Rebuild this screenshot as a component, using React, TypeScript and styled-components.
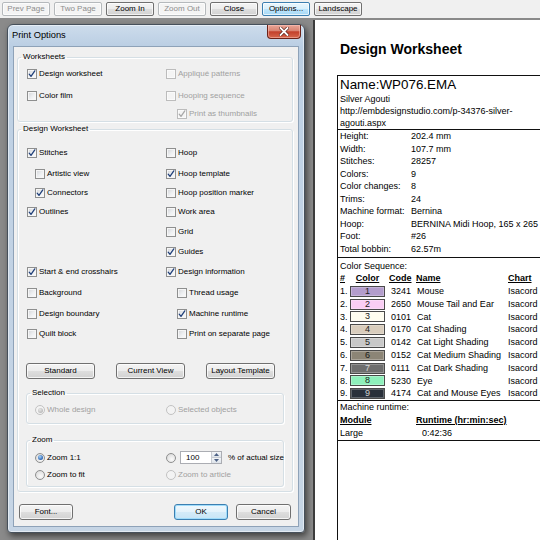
import React from "react";
import styled, { createGlobalStyle } from "styled-components";

const GlobalStyle = createGlobalStyle`
  html, body { margin: 0; padding: 0; }
  body {
    width: 540px; height: 540px; overflow: hidden; background: #8a8a8a;
    font-family: "Liberation Sans", Arial, sans-serif;
  }
  * { box-sizing: border-box; }
`;

const Screen = styled.div`
  width: 540px;
  height: 540px;
  display: flex;
  flex-direction: column;
  overflow: hidden;
`;

/* ---------- toolbar ---------- */
const Toolbar = styled.div`
  height: 18px;
  flex-shrink: 0;
  display: flex;
  gap: 4px;
  padding: 2px 0 0 2px;
  background: #f0f0f0;
`;

type BtnState = "normal" | "disabled" | "focus";

const ToolButton = styled.button<{ $state: BtnState }>`
  width: 48px;
  height: 14px;
  padding: 0;
  border-radius: 2px;
  font-family: "Liberation Sans", Arial, sans-serif;
  font-size: 8px;
  line-height: 12px;
  text-align: center;
  border: 1px solid
    ${(p) => (p.$state === "disabled" ? "#b5b9bc" : p.$state === "focus" ? "#3c7fb1" : "#707070")};
  color: ${(p) => (p.$state === "disabled" ? "#8d8d8d" : "#000")};
  background: ${(p) =>
    p.$state === "disabled"
      ? "#f4f4f4"
      : p.$state === "focus"
      ? "linear-gradient(#eaf6fd, #d9f0fc 50%, #bee6fd 51%, #a7d9f5)"
      : "linear-gradient(#f4f4f4, #ececec 50%, #dedede 51%, #d2d2d2)"};
  box-shadow: inset 0 0 0 1px rgba(255, 255, 255, 0.7);
`;

/* ---------- main area ---------- */
const Main = styled.div`
  flex: 1;
  min-height: 0;
  display: flex;
  background: #8a8a8a;
`;

/* ---------- dialog ---------- */
const Dialog = styled.div`
  flex-shrink: 0;
  align-self: flex-start;
  width: 298px;
  height: 509px;
  margin: 6px 0 0 7px;
  border: 1px solid #46505b;
  border-radius: 6px 6px 4px 4px;
  background: linear-gradient(180deg, #cddcec 0px, #bacee3 22px, #bfd1e4 80px, #c6d5e5 100%);
  box-shadow: 2px 3px 6px rgba(0, 0, 0, 0.55), inset 0 0 0 1px rgba(255, 255, 255, 0.5);
  display: flex;
  flex-direction: column;
`;

const TitleBar = styled.div`
  height: 21px;
  flex-shrink: 0;
  display: flex;
  align-items: flex-start;
  justify-content: space-between;
  padding: 0 3px 0 4px;
`;

const TitleText = styled.span`
  font-size: 9.3px;
  line-height: 20px;
  color: #000;
`;

const CloseButton = styled.div`
  width: 34px;
  height: 14px;
  border: 1px solid #6b2218;
  border-top: none;
  border-radius: 0 0 4px 4px;
  background: linear-gradient(#e8a597, #d98371 45%, #c3402b 52%, #d6674c);
  display: flex;
  align-items: center;
  justify-content: center;
  box-shadow: inset 0 0 0 1px rgba(255, 200, 190, 0.5);
`;

const Client = styled.div`
  flex: 1;
  margin: 0 5px 5px 5px;
  border: 1px solid #8ea2b8;
  background: #f0f0f0;
  display: flex;
  flex-direction: column;
  padding: 5px 5px 6px 3px;
`;

const Group = styled.fieldset<{ $mt?: number; $inset?: boolean }>`
  margin: ${(p) => p.$mt ?? 0}px ${(p) => (p.$inset ? 8 : 0)}px 0;
  padding: 0;
  min-width: 0;
  border: 1px solid #d5dfe5;
  border-radius: 3px;
  box-shadow: inset 1px 1px 0 #fff, 1px 1px 0 #fff;
`;

const Legend = styled.legend`
  margin-left: 3px;
  padding: 0 2px;
  font-size: 8px;
  line-height: 10px;
  color: #000;
`;

const OptionGrid = styled.div<{ $rows: string; $col: number; $pl: number; $pt?: number; $pb?: number }>`
  display: grid;
  grid-template-columns: ${(p) => p.$col}px 1fr;
  grid-template-rows: ${(p) => p.$rows};
  padding: ${(p) => p.$pt ?? 0}px 0 ${(p) => p.$pb ?? 0}px ${(p) => p.$pl}px;
`;

const Item = styled.label<{ $indent?: number; $disabled?: boolean; $col?: number; $row?: number }>`
  display: flex;
  align-items: center;
  gap: 2px;
  padding-left: ${(p) => p.$indent ?? 0}px;
  font-size: 8px;
  line-height: 10px;
  white-space: nowrap;
  color: ${(p) => (p.$disabled ? "#a0a0a0" : "#000")};
  grid-column: ${(p) => p.$col ?? "auto"};
  grid-row: ${(p) => p.$row ?? "auto"};
`;

const Box = styled.span<{ $disabled?: boolean }>`
  width: 10px;
  height: 10px;
  flex-shrink: 0;
  border: 1px solid ${(p) => (p.$disabled ? "#bcbcbc" : "#8e8f8f")};
  background: ${(p) =>
    p.$disabled ? "#f4f4f4" : "linear-gradient(135deg, #d2d4d8 0%, #eef0f2 55%, #fcfcfc 100%)"};
  box-shadow: inset 0 0 0 1px ${(p) => (p.$disabled ? "#fafafa" : "#f6f6f6")};
  display: flex;
  align-items: center;
  justify-content: center;
`;

const Round = styled.span<{ $disabled?: boolean }>`
  width: 10px;
  height: 10px;
  flex-shrink: 0;
  border-radius: 50%;
  border: 1px solid ${(p) => (p.$disabled ? "#c2c2c2" : "#8e8f8f")};
  background: ${(p) =>
    p.$disabled ? "#f3f3f3" : "radial-gradient(circle at 60% 65%, #fbfbfb 0%, #e4e4e4 60%, #d0d0d0 100%)"};
  display: flex;
  align-items: center;
  justify-content: center;
`;

const Dot = styled.span<{ $disabled?: boolean }>`
  width: 5px;
  height: 5px;
  border-radius: 50%;
  background: ${(p) =>
    p.$disabled
      ? "radial-gradient(circle at 40% 35%, #e6e6e6, #a9a9a9)"
      : "radial-gradient(circle at 40% 35%, #a9d4f7, #2a64b4 70%, #1b3f7a)"};
`;

const CheckMark = ({ color }: { color: string }) => (
  <svg width="8" height="8" viewBox="0 0 8 8">
    <path d="M1.2 4.2 L3 6.4 L6.8 0.9" fill="none" stroke={color} strokeWidth="1.3" strokeLinecap="round" strokeLinejoin="round" />
  </svg>
);

const Check = ({
  label,
  checked,
  disabled,
  indent,
  col,
  row,
}: {
  label: string;
  checked?: boolean;
  disabled?: boolean;
  indent?: number;
  col?: number;
  row?: number;
}) => (
  <Item $indent={indent} $disabled={disabled} $col={col} $row={row}>
    <Box $disabled={disabled}>{checked && <CheckMark color={disabled ? "#a8a8a8" : "#21407a"} />}</Box>
    {label}
  </Item>
);

const Radio = ({
  label,
  checked,
  disabled,
}: {
  label?: string;
  checked?: boolean;
  disabled?: boolean;
}) => (
  <Item $disabled={disabled}>
    <Round $disabled={disabled}>{checked && <Dot $disabled={disabled} />}</Round>
    {label}
  </Item>
);

const ZoomCustom = styled.div`
  display: flex;
  align-items: center;
  gap: 4px;
  font-size: 8px;
  white-space: nowrap;
`;

const SpinBox = styled.div`
  width: 42px;
  height: 13px;
  border: 1px solid #abadb3;
  background: #fff;
  display: flex;
  margin-right: 2px;
`;

const SpinText = styled.span`
  flex: 1;
  font-size: 8px;
  line-height: 11px;
  padding-left: 5px;
`;

const SpinButtons = styled.div`
  width: 10px;
  display: flex;
  flex-direction: column;
  border-left: 1px solid #c8ccd2;
`;

const SpinHalf = styled.div<{ $up?: boolean }>`
  flex: 1;
  display: flex;
  align-items: center;
  justify-content: center;
  background: linear-gradient(#f4f6f8, #dde3ea);
  border-bottom: ${(p) => (p.$up ? "1px solid #c8ccd2" : "none")};
`;

const Arrow = ({ up }: { up?: boolean }) => (
  <svg width="5" height="3" viewBox="0 0 5 3">
    <path d={up ? "M0 3 L2.5 0 L5 3 Z" : "M0 0 L2.5 3 L5 0 Z"} fill="#4d6185" />
  </svg>
);

const ButtonRow = styled.div`
  display: flex;
  gap: 21px;
  padding-left: 8px;
  margin-top: 19px;
`;

const PushButton = styled.button<{ $w: number; $default?: boolean }>`
  width: ${(p) => p.$w}px;
  height: 16px;
  padding: 0;
  font-family: "Liberation Sans", Arial, sans-serif;
  font-size: 8px;
  line-height: 14px;
  color: #000;
  border-radius: 3px;
  border: 1px solid ${(p) => (p.$default ? "#3c7fb1" : "#707070")};
  background: ${(p) =>
    p.$default
      ? "linear-gradient(#f0f8fd, #e3f2fb 50%, #d3ebf9 51%, #c8e5f6)"
      : "linear-gradient(#f4f4f4, #ececec 50%, #dedede 51%, #d2d2d2)"};
  box-shadow: inset 0 0 0 1px ${(p) => (p.$default ? "#9fdcfb" : "rgba(255,255,255,0.75)")};
`;

const Footer = styled.div`
  display: flex;
  gap: 8px;
  margin-top: 12px;
  padding: 0 2px;
`;

const Spacer = styled.div`
  flex: 1;
`;

/* ---------- page preview ---------- */
const Page = styled.div`
  flex: 1;
  min-width: 0;
  margin: 2px 0 0 8px;
  background: #fff;
  border-left: 2px solid #3c3c3c;
  overflow: hidden;
  display: flex;
  flex-direction: column;
  padding: 21px 0 0 22px;
  color: #000;
`;

const PageTitle = styled.div`
  font-size: 14px;
  font-weight: bold;
  line-height: 16px;
  margin-left: 3px;
`;

const Sheet = styled.div`
  margin-top: 18px;
  width: 320px;
  flex: 1;
  flex-shrink: 0;
  border-top: 1px solid #111;
  border-left: 1px solid #111;
  display: flex;
  flex-direction: column;
  font-size: 9px;
`;

const Section = styled.div<{ $pt?: number; $pb?: number; $last?: boolean }>`
  padding: ${(p) => p.$pt ?? 0}px 0 ${(p) => p.$pb ?? 0}px 2px;
  border-bottom: 1px solid #111;
`;

const NameLine = styled.div`
  font-size: 13.4px;
  line-height: 17px;
`;

const TextLine = styled.div`
  line-height: 12px;
`;

const InfoGrid = styled.div`
  display: grid;
  grid-template-columns: 71px 1fr;
  grid-auto-rows: 12.5px;
  line-height: 12.5px;
  white-space: nowrap;
`;

const ColorGrid = styled.div`
  display: grid;
  grid-template-columns: 10px 39px 27px 92px auto;
  grid-template-rows: 13px;
  grid-auto-rows: 12.8px;
  line-height: 12.8px;
  white-space: nowrap;
  align-items: center;
`;

const Head = styled.span<{ $center?: boolean }>`
  font-weight: bold;
  text-decoration: underline;
  line-height: 13px;
  width: ${(p) => (p.$center ? "35px" : "auto")};
  text-align: ${(p) => (p.$center ? "center" : "left")};
`;

const Cell = styled.span<{ $pl?: number }>`
  padding-left: ${(p) => p.$pl ?? 0}px;
`;

const Swatch = styled.span<{ $bg: string; $fg: string }>`
  width: 35px;
  height: 11px;
  border: 1px solid #4a4a4a;
  background: ${(p) => p.$bg};
  color: ${(p) => p.$fg};
  text-align: center;
  line-height: 9px;
  font-size: 9px;
  box-shadow: inset 0 0 0 1px rgba(255, 255, 255, 0.25);
`;

const RuntimeGrid = styled.div`
  display: grid;
  grid-template-columns: 76px 1fr;
  grid-auto-rows: 12.8px;
  line-height: 12.8px;
  white-space: nowrap;
`;

const info: [string, string][] = [
  ["Height:", "202.4 mm"],
  ["Width:", "107.7 mm"],
  ["Stitches:", "28257"],
  ["Colors:", "9"],
  ["Color changes:", "8"],
  ["Trims:", "24"],
  ["Machine format:", "Bernina"],
  ["Hoop:", "BERNINA Midi Hoop, 165 x 265"],
  ["Foot:", "#26"],
  ["Total bobbin:", "62.57m"],
];

const colors = [
  { n: 1, bg: "#b39dcc", fg: "#222", code: "3241", name: "Mouse" },
  { n: 2, bg: "#f9cdf4", fg: "#222", code: "2650", name: "Mouse Tail and Ear" },
  { n: 3, bg: "#fffdf0", fg: "#222", code: "0101", name: "Cat" },
  { n: 4, bg: "#d9cdbd", fg: "#222", code: "0170", name: "Cat Shading" },
  { n: 5, bg: "#c8c8c8", fg: "#222", code: "0142", name: "Cat Light Shading" },
  { n: 6, bg: "#8c8576", fg: "#1a1a1a", code: "0152", name: "Cat Medium Shading" },
  { n: 7, bg: "#6e6e6e", fg: "#d8d8d8", code: "0111", name: "Cat Dark Shading" },
  { n: 8, bg: "#8ef0bb", fg: "#222", code: "5230", name: "Eye" },
  { n: 9, bg: "#29303a", fg: "#d0d0d0", code: "4174", name: "Cat and Mouse Eyes" },
];

export default function App() {
  return (
    <Screen>
      <GlobalStyle />
      <Toolbar>
        <ToolButton $state="disabled">Prev Page</ToolButton>
        <ToolButton $state="disabled">Two Page</ToolButton>
        <ToolButton $state="normal">Zoom In</ToolButton>
        <ToolButton $state="disabled">Zoom Out</ToolButton>
        <ToolButton $state="normal">Close</ToolButton>
        <ToolButton $state="focus">Options...</ToolButton>
        <ToolButton $state="normal">Landscape</ToolButton>
      </Toolbar>
      <Main>
        <Dialog>
          <TitleBar>
            <TitleText>Print Options</TitleText>
            <CloseButton>
              <svg width="10" height="9" viewBox="0 0 10 9">
                <path d="M1.5 1 L8.5 8 M8.5 1 L1.5 8" stroke="#5a1e16" strokeWidth="3.2" strokeLinecap="square" />
                <path d="M1.5 1 L8.5 8 M8.5 1 L1.5 8" stroke="#fff" strokeWidth="1.8" strokeLinecap="square" />
              </svg>
            </CloseButton>
          </TitleBar>
          <Client>
            <Group>
              <Legend>Worksheets</Legend>
              <OptionGrid $rows="22px 22px 14px" $col={139} $pl={9} $pt={1}>
                <Check label="Design worksheet" checked />
                <Check label="Appliqué patterns" disabled />
                <Check label="Color film" />
                <Check label="Hooping sequence" disabled />
                <Check label="Print as thumbnails" checked disabled indent={11} col={2} />
              </OptionGrid>
            </Group>
            <Group $mt={2}>
              <Legend>Design Worksheet</Legend>
              <OptionGrid
                $rows="22px 20px 18px 20px 19px 21px 20px 21px 21px 20px"
                $col={139}
                $pl={9}
                $pt={8}
              >
                <Check label="Stitches" checked col={1} row={1} />
                <Check label="Artistic view" indent={8} col={1} row={2} />
                <Check label="Connectors" checked indent={8} col={1} row={3} />
                <Check label="Outlines" checked col={1} row={4} />
                <Check label="Start & end crosshairs" checked col={1} row={7} />
                <Check label="Background" col={1} row={8} />
                <Check label="Design boundary" col={1} row={9} />
                <Check label="Quilt block" col={1} row={10} />
                <Check label="Hoop" col={2} row={1} />
                <Check label="Hoop template" checked col={2} row={2} />
                <Check label="Hoop position marker" col={2} row={3} />
                <Check label="Work area" col={2} row={4} />
                <Check label="Grid" col={2} row={5} />
                <Check label="Guides" checked col={2} row={6} />
                <Check label="Design information" checked col={2} row={7} />
                <Check label="Thread usage" indent={11} col={2} row={8} />
                <Check label="Machine runtime" checked indent={11} col={2} row={9} />
                <Check label="Print on separate page" indent={11} col={2} row={10} />
              </OptionGrid>
              <ButtonRow>
                <PushButton $w={69}>Standard</PushButton>
                <PushButton $w={69}>Current View</PushButton>
                <PushButton $w={69}>Layout Template</PushButton>
              </ButtonRow>
              <Group $mt={9} $inset>
                <Legend>Selection</Legend>
                <OptionGrid $rows="20px" $col={131} $pl={8} $pt={2} $pb={3}>
                  <Radio label="Whole design" checked disabled />
                  <Radio label="Selected objects" disabled />
                </OptionGrid>
              </Group>
              <Group $mt={11} $inset>
                <Legend>Zoom</Legend>
                <OptionGrid $rows="17px 17px" $col={131} $pl={8} $pt={4} $pb={3}>
                  <Radio label="Zoom 1:1" checked />
                  <ZoomCustom>
                    <Radio />
                    <SpinBox>
                      <SpinText>100</SpinText>
                      <SpinButtons>
                        <SpinHalf $up>
                          <Arrow up />
                        </SpinHalf>
                        <SpinHalf>
                          <Arrow />
                        </SpinHalf>
                      </SpinButtons>
                    </SpinBox>
                    % of actual size
                  </ZoomCustom>
                  <Radio label="Zoom to fit" />
                  <Radio label="Zoom to article" disabled />
                </OptionGrid>
              </Group>
              <Spacer style={{ height: 4, flex: "none" }} />
            </Group>
            <Footer>
              <PushButton $w={54}>Font...</PushButton>
              <Spacer />
              <PushButton $w={54} $default>
                OK
              </PushButton>
              <PushButton $w={55}>Cancel</PushButton>
            </Footer>
          </Client>
        </Dialog>
        <Page>
          <PageTitle>Design Worksheet</PageTitle>
          <Sheet>
            <Section>
              <NameLine>Name:WP076.EMA</NameLine>
              <TextLine>Silver Agouti</TextLine>
              <TextLine>http://embdesignstudio.com/p-34376-silver-</TextLine>
              <TextLine>agouti.aspx</TextLine>
            </Section>
            <Section $pb={2}>
              <InfoGrid>
                {info.map(([k, v]) => (
                  <React.Fragment key={k}>
                    <span>{k}</span>
                    <span>{v}</span>
                  </React.Fragment>
                ))}
              </InfoGrid>
            </Section>
            <Section $pt={2}>
              <TextLine>Color Sequence:</TextLine>
              <ColorGrid>
                <Head>#</Head>
                <Head $center>Color</Head>
                <Head>Code</Head>
                <Head>Name</Head>
                <Head>Chart</Head>
                {colors.map((c) => (
                  <React.Fragment key={c.n}>
                    <Cell>{c.n}.</Cell>
                    <Swatch $bg={c.bg} $fg={c.fg}>
                      {c.n}
                    </Swatch>
                    <Cell $pl={2}>{c.code}</Cell>
                    <Cell $pl={1}>{c.name}</Cell>
                    <Cell>Isacord</Cell>
                  </React.Fragment>
                ))}
              </ColorGrid>
            </Section>
            <Section>
              <RuntimeGrid>
                <span>Machine runtime:</span>
                <span />
                <Head>Module</Head>
                <Head>Runtime (hr:min:sec)</Head>
                <span>Large</span>
                <Cell $pl={6}>0:42:36</Cell>
              </RuntimeGrid>
            </Section>
          </Sheet>
        </Page>
      </Main>
    </Screen>
  );
}
